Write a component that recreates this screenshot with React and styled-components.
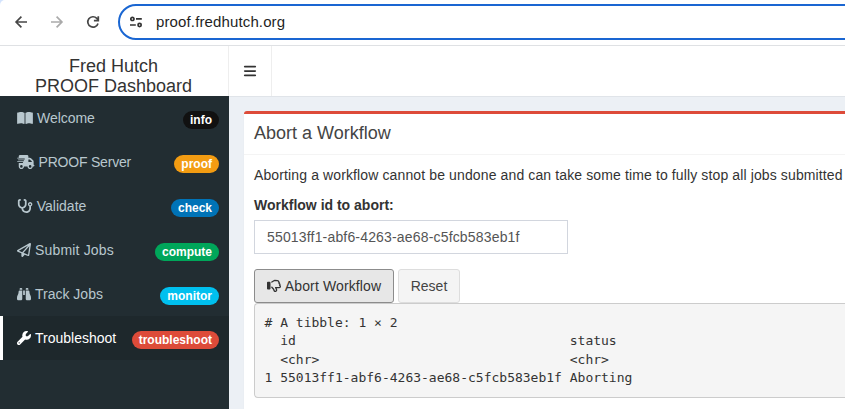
import React from "react";
import styled, { createGlobalStyle } from "styled-components";
import {
  FaBars,
  FaBinoculars,
  FaBookOpen,
  FaRegPaperPlane,
  FaRegThumbsDown,
  FaStethoscope,
  FaTruckFast,
  FaWrench,
} from "react-icons/fa6";

const Global = createGlobalStyle`
  * { box-sizing: border-box; }
  html, body { margin: 0; height: 100%; overflow: hidden; }
  body {
    font-family: "Liberation Sans", Arial, sans-serif;
    font-size: 14px;
    line-height: 20px;
    color: #333;
    background: #ecf0f5;
  }
`;

const Page = styled.div`
  display: flex;
  flex-direction: column;
  height: 100vh;
`;

const BrowserFrame = styled.div`
  flex: none;
  background: #d3e3fd;
`;

const BrowserBar = styled.div`
  display: flex;
  align-items: flex-start;
  height: 46px;
  padding-top: 4px;
  background: #fff;
  border-bottom: 1px solid #dfe1e4;
  border-radius: 5px 0 0 0;
`;

const NavIcons = styled.div`
  display: flex;
  align-items: center;
  gap: 20px;
  height: 36px;
  width: 118px;
  padding-left: 13px;
`;

const ChromeIcon = styled.svg`
  flex: none;
  width: 16px;
  height: 16px;
  fill: none;
  stroke: ${(p) => p.$color || "#474747"};
  stroke-width: 1.7;
`;

const AddressBar = styled.div`
  flex: 1;
  display: flex;
  align-items: center;
  gap: 12px;
  height: 36px;
  padding-left: 8px;
  margin-right: -30px;
  border: 2px solid #1a66d2;
  border-radius: 18px;
  color: #1f1f1f;
  font-size: 15px;
  letter-spacing: 0.13px;
`;

const Header = styled.header`
  flex: none;
  display: flex;
  height: 50px;
  background: #fff;
`;

const Logo = styled.div`
  display: flex;
  flex-direction: column;
  align-items: center;
  width: 229px;
  padding: 10px 1px 0 0;
  border-right: 1px solid #eee;
  font-size: 18px;
  line-height: 20px;
  white-space: nowrap;
`;

const Toggle = styled.div`
  display: flex;
  align-items: center;
  justify-content: center;
  width: 43px;
  border-right: 1px solid #eee;
  font-size: 14px;
`;

const Body = styled.div`
  flex: 1;
  display: flex;
  min-height: 0;
`;

const Sidebar = styled.nav`
  flex: none;
  width: 229px;
  background: #222d32;
`;

const Item = styled.div`
  display: flex;
  align-items: center;
  height: 44px;
  padding: 0 10px 0 14px;
  border-left: 3px solid ${(p) => (p.$active ? "#fff" : "transparent")};
  background: ${(p) => (p.$active ? "#1e282c" : "transparent")};
  color: ${(p) => (p.$active ? "#fff" : "#b8c7ce")};

  svg {
    flex: none;
    width: ${(p) => p.$icon}px;
    height: 14px;
    margin-right: 4px;
  }
`;

const ItemLabel = styled.span`
  letter-spacing: ${(p) => p.$spacing || 0}px;
  white-space: nowrap;
`;

const Badge = styled.span`
  margin: 4px 0 0 auto;
  height: 18px;
  padding: 0 7px;
  border-radius: 9px;
  background: ${(p) => p.$color};
  color: #fff;
  font-size: 12px;
  font-weight: 700;
  line-height: 18px;
`;

const Content = styled.main`
  flex: 1;
  min-width: 0;
  padding: 15px 0 0 15px;
  box-shadow: inset 0 1px 0 #e0e4e9;
`;

const Box = styled.section`
  height: 310px;
  background: #fff;
  border-top: 3px solid #dd4b39;
  border-radius: 3px 0 0 3px;
  box-shadow: 0 1px 1px rgba(0, 0, 0, 0.1);
`;

const BoxTitle = styled.h3`
  height: 41px;
  margin: 0;
  padding: 10px;
  border-bottom: 1px solid #f4f4f4;
  color: #444;
  font-size: 18px;
  font-weight: 400;
  line-height: 18px;
`;

const BoxBody = styled.div`
  padding: 10px 0 0 10px;
  white-space: nowrap;
`;

const Text = styled.p`
  margin: 0 0 10px;
  letter-spacing: 0.122px;
`;

const Label = styled.label`
  display: block;
  margin-bottom: 5px;
  font-weight: 700;
`;

const Input = styled.input`
  display: block;
  width: 314px;
  height: 34px;
  padding: 6px 12px;
  border: 1px solid #d2d6de;
  background: #fff;
  color: #555;
  font: inherit;
  letter-spacing: 0.17px;
`;

const Buttons = styled.div`
  display: flex;
  gap: 4px;
  margin-top: 15px;
`;

const Button = styled.button`
  display: flex;
  align-items: center;
  justify-content: center;
  gap: 4px;
  width: ${(p) => p.$width}px;
  height: 34px;
  padding: 0;
  border: 1px solid ${(p) => (p.$active ? "#8c8c8c" : "#ddd")};
  border-radius: 3px;
  background: ${(p) => (p.$active ? "#e7e7e7" : "#f4f4f4")};
  color: ${(p) => (p.$active ? "#333" : "#444")};
  font: inherit;
  letter-spacing: ${(p) => (p.$active ? 0.12 : 0)}px;
`;

const Output = styled.pre`
  height: 95px;
  margin: 0;
  padding: 9.5px;
  border: 1px solid #ccc;
  border-right: 0;
  border-radius: 4px 0 0 4px;
  background: #f5f5f5;
  color: #333;
  font-family: "DejaVu Sans Mono", monospace;
  font-size: 13px;
  line-height: 18.57px;
`;

const items = [
  { label: "Welcome", badge: "info", color: "#111", Icon: FaBookOpen, icon: 16, spacing: -0.05 },
  { label: "PROOF Server", badge: "proof", color: "#f39c12", Icon: FaTruckFast, icon: 17.5, spacing: -0.2 },
  { label: "Validate", badge: "check", color: "#0073b7", Icon: FaStethoscope, icon: 15.75 },
  { label: "Submit Jobs", badge: "compute", color: "#00a65a", Icon: FaRegPaperPlane, icon: 14, spacing: 0.17 },
  { label: "Track Jobs", badge: "monitor", color: "#00c0ef", Icon: FaBinoculars, icon: 14 },
  { label: "Troubleshoot", badge: "troubleshoot", color: "#dd4b39", Icon: FaWrench, icon: 14, active: true },
];

const output = [
  "# A tibble: 1 × 2",
  "  id                                   status",
  "  <chr>                                <chr>",
  "1 55013ff1-abf6-4263-ae68-c5fcb583eb1f Aborting",
].join("\n");

export default function App() {
  return (
    <Page>
      <Global />
      <BrowserFrame>
        <BrowserBar>
          <NavIcons>
            <ChromeIcon viewBox="0 0 16 16">
              <path d="M14 8H3.4M8.4 2.7 3.1 8l5.3 5.3" />
            </ChromeIcon>
            <ChromeIcon viewBox="0 0 16 16" $color="#aaa">
              <path d="M2 8h10.6M7.6 2.7 12.9 8l-5.3 5.3" />
            </ChromeIcon>
            <ChromeIcon viewBox="0 0 16 16">
              <path d="M13 9.4A5.2 5.2 0 1 1 11.8 4.4L13.3 6M13.3 2.2v4.5H8.9" />
            </ChromeIcon>
          </NavIcons>
          <AddressBar>
            <ChromeIcon viewBox="0 0 16 16" $color="#333">
              <circle cx="4.4" cy="4.9" r="1.6" />
              <path d="M8 4.9h5.8M2 11h5.8" />
              <circle cx="11.6" cy="11" r="1.6" />
            </ChromeIcon>
            <span>proof.fredhutch.org</span>
          </AddressBar>
        </BrowserBar>
      </BrowserFrame>
      <Header>
        <Logo>
          <span>Fred Hutch</span>
          <span>PROOF Dashboard</span>
        </Logo>
        <Toggle>
          <FaBars />
        </Toggle>
      </Header>
      <Body>
        <Sidebar>
          {items.map(({ label, badge, color, Icon, icon, spacing, active }) => (
            <Item key={label} $active={active} $icon={icon}>
              <Icon />
              <ItemLabel $spacing={spacing}>{label}</ItemLabel>
              <Badge $color={color}>{badge}</Badge>
            </Item>
          ))}
        </Sidebar>
        <Content>
          <Box>
            <BoxTitle>Abort a Workflow</BoxTitle>
            <BoxBody>
              <Text>
                Aborting a workflow cannot be undone and can take some time to fully stop all jobs submitted
              </Text>
              <Label htmlFor="workflow">Workflow id to abort:</Label>
              <Input id="workflow" readOnly value="55013ff1-abf6-4263-ae68-c5fcb583eb1f" />
              <Buttons>
                <Button $active $width={140}>
                  <FaRegThumbsDown />
                  Abort Workflow
                </Button>
                <Button $width={62}>Reset</Button>
              </Buttons>
              <Output>{output}</Output>
            </BoxBody>
          </Box>
        </Content>
      </Body>
    </Page>
  );
}
